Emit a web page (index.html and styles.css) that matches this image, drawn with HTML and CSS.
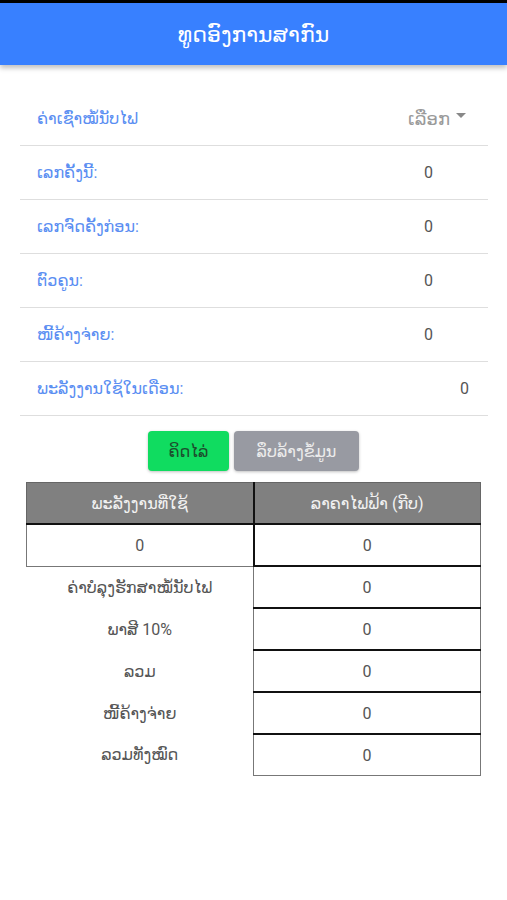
FILE: index.html
```html
<!DOCTYPE html>
<html lang="lo">
<head>
  <meta charset="UTF-8" />
  <meta name="viewport" content="width=device-width, initial-scale=1.0">
  <title>ຄິດໄລ່ຄ່າໄຟຟ້າ</title>
  <link rel="stylesheet" href="styles.css">
</head>
<body>

  <div class="statusbar"></div>
  <!-- Toolbar -->
  <header class="toolbar">
    <h1 class="title">ທູດອົງການສາກົນ</h1>
  </header>

  <main class="content">
    <!-- Input list -->
    <div class="list">
      <div class="item">
        <span class="label">ຄ່າເຊົ່າໝໍ້ນັບໄຟ</span>
        <span class="select">ເລືອກ <span class="caret"></span></span>
      </div>
      <div class="item">
        <span class="label">ເລກຄັ້ງນີ້:</span>
        <span class="value">0</span>
      </div>
      <div class="item">
        <span class="label">ເລກຈົດຄັ້ງກ່ອນ:</span>
        <span class="value">0</span>
      </div>
      <div class="item">
        <span class="label">ຕົວຄູນ:</span>
        <span class="value">0</span>
      </div>
      <div class="item">
        <span class="label">ໜີ້ຄ້າງຈ່າຍ:</span>
        <span class="value">0</span>
      </div>
      <div class="item">
        <span class="label">ພະລັງງານໃຊ້ໃນເດືອນ:</span>
        <span class="value far">0</span>
      </div>
    </div>

    <div class="buttons">
      <button class="btn btn-success">ຄິດໄລ່</button>
      <button class="btn btn-medium">ລຶບລ້າງຂໍ້ມູນ</button>
    </div>

    <!-- Result table -->
    <table class="result">
      <tr>
        <th>ພະລັງງານທີ່ໃຊ້</th>
        <th>ລາຄາໄຟຟ້າ (ກີບ)</th>
      </tr>
      <tr>
        <td class="box first">0</td>
        <td class="box">0</td>
      </tr>
      <tr>
        <td class="name">ຄ່າບໍລຸງຮັກສາໝໍ້ນັບໄຟ</td>
        <td class="box">0</td>
      </tr>
      <tr>
        <td class="name">ພາສີ 10%</td>
        <td class="box">0</td>
      </tr>
      <tr>
        <td class="name">ລວມ</td>
        <td class="box">0</td>
      </tr>
      <tr>
        <td class="name">ໜີ້ຄ້າງຈ່າຍ</td>
        <td class="box">0</td>
      </tr>
      <tr>
        <td class="name">ລວມທັງໝົດ</td>
        <td class="box">0</td>
      </tr>
    </table>
  </main>

</body>
</html>
```

FILE: styles.css
```css
body { margin:0; background:#fff; font-family: Roboto, "DejaVu Sans", sans-serif; color:#333; }
.statusbar { height:3px; background:#000; }
.toolbar { height:62px; background:#3880ff; display:flex; align-items:center; justify-content:center; box-shadow: 0 3px 5px rgba(0,0,0,0.25); position:relative; }
.title { margin:0; color:#fff; font-size:22px; font-weight:400; }

.content { padding-top:27px; }
.list { margin:0 19px 0 20px; }
.item { height:53px; border-bottom:1px solid #dedede; display:flex; align-items:center; padding-left:17px; }
.label { flex:1; color:#5a8ef2; font-size:16px; }
.value { color:#555; font-size:16px; padding-right:55px; }
.value.far { padding-right:19px; }
.select { color:#9a9a9a; font-size:18px; padding-right:22px; display:flex; align-items:center; gap:6px; }
.caret { width:0; height:0; border-left:5px solid transparent; border-right:5px solid transparent; border-top:5px solid #888; margin-top:-6px; }

.buttons { display:flex; justify-content:center; gap:5px; margin-top:15px; }
.btn { height:40px; border:none; border-radius:4px; font-family:inherit; font-size:16px; padding:0 12px; box-shadow: 0 1px 3px rgba(0,0,0,0.25); }
.btn-success { background:#10dc60; color:#1d4d2d; width:81px; }
.btn-medium { background:#989aa2; color:#ececec; width:125px; }

.result { width:455px; margin:11px auto 0; border-collapse:collapse; font-size:16px; }
.result th { height:38px; background:#808080; color:#f2f2f2; font-weight:400; border:1px solid #666; border-bottom:2px solid #111; width:50%; }
.result th + th { border-left:2px solid #111; }
.result td { height:40px; text-align:center; padding:0; }
.result td.box { border:1px solid #777; border-top:2px solid #111; color:#555; }
.result td.first { border-top:none; border-right:2px solid #111; }
.result td.name { border:none; color:#555; }
```
